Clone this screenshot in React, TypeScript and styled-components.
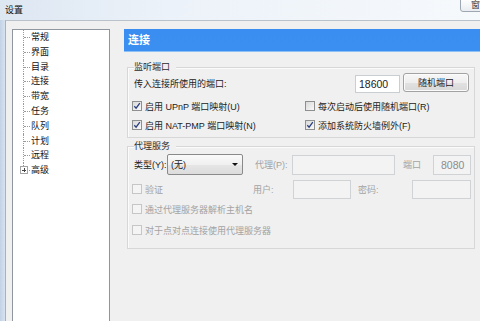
import React from 'react';
import styled, { createGlobalStyle } from 'styled-components';

const Global = createGlobalStyle`
  html, body { margin: 0; padding: 0; width: 480px; height: 321px; overflow: hidden; background: #f0f0f0; }
  body {
    font-family: "Liberation Sans", "Noto Sans CJK SC", sans-serif;
    font-size: 9px;
    color: #222;
  }
  * { box-sizing: border-box; }
`;

const Window = styled.div`
  width: 480px;
  height: 321px;
  display: flex;
  flex-direction: column;
  overflow: hidden;
  background: #f0f0f0;
`;

const TitleBar = styled.div`
  height: 20px;
  flex: none;
  display: flex;
  justify-content: space-between;
  align-items: flex-start;
  padding-left: 5px;
  background: linear-gradient(to right, #dde7f2 0%, #ecf2f9 35%, #f6f9fc 100%);
`;

const TitleText = styled.span`
  align-self: center;
  font-size: 9px;
  color: #111;
  margin-top: -2px;
`;

const CaptionButton = styled.div`
  width: 30px;
  height: 13px;
  margin-top: -1px;
  margin-right: -10px;
  border: 1px solid #9ea7b1;
  border-radius: 0 0 3px 3px;
  background: linear-gradient(#fdfdfd, #e9edf1);
  font-size: 9px;
  color: #333;
  padding-left: 10px;
  line-height: 11px;
  overflow: hidden;
`;

const Frame = styled.div`
  flex: 1;
  display: flex;
  min-height: 0;
`;

const FrameEdge = styled.div`
  width: 5px;
  flex: none;
  background: linear-gradient(to right, #c3d3e6, #d6e2ef);
`;

const Client = styled.div`
  flex: 1;
  display: flex;
  align-items: stretch;
  border-left: 1px solid #a9b2bc;
  border-top: 1px solid #b9c1ca;
  padding: 8px 0 0 6px;
  min-height: 0;
`;

const Tree = styled.div`
  width: 98px;
  flex: none;
  background: #fff;
  border: 1px solid #8f969e;
  margin-bottom: -4px;
`;

const TreeItem = styled.div<{ $last?: boolean }>`
  position: relative;
  height: 14.8px;
  line-height: 14.8px;
  padding-left: 18px;
  font-size: 9px;
  color: #111;
  &::before {
    content: '';
    position: absolute;
    left: 10px;
    top: 0;
    height: ${p => (p.$last ? '7px' : '14.8px')};
    border-left: 1px dotted #9a9a9a;
  }
  &::after {
    content: '';
    position: absolute;
    left: 11px;
    top: 7px;
    width: 6px;
    border-top: 1px dotted #9a9a9a;
  }
`;

const Expander = styled.span`
  position: absolute;
  left: 7px;
  top: 3px;
  width: 8px;
  height: 8px;
  border: 1px solid #a4a4a4;
  background: #fff;
  z-index: 1;
  display: flex;
  align-items: center;
  justify-content: center;
  &::before {
    content: '';
    width: 4px;
    height: 1px;
    background: #444;
    position: absolute;
  }
  &::after {
    content: '';
    width: 1px;
    height: 4px;
    background: #444;
    position: absolute;
  }
`;

const Panel = styled.div`
  flex: 1;
  margin-left: 14px;
  display: flex;
  flex-direction: column;
  min-width: 0;
`;

const Header = styled.div`
  height: 23px;
  flex: none;
  background: linear-gradient(#3a8ef1, #3b8ff0);
  border-bottom: 1px solid #8ebff5;
  color: #fff;
  font-weight: bold;
  font-size: 11px;
  display: flex;
  align-items: center;
  padding-left: 4px;
  padding-bottom: 3px;
`;

const Group = styled.section<{ $mt: number; $pb: number }>`
  margin: ${p => p.$mt}px 6px 0 3px;
  padding: 0 3px ${p => p.$pb}px 6px;
  border: 1px solid #d7d7d7;
  box-shadow: inset 1px 1px 0 #fbfbfb;
  display: flex;
  flex-direction: column;
`;

const GroupTitle = styled.div`
  align-self: flex-start;
  height: 12px;
  line-height: 12px;
  margin-top: -7px;
  padding-right: 6px;
  background: #f0f0f0;
  font-size: 9px;
  color: #2c2c2c;
`;

const Row = styled.div<{ $mt: number; $h: number }>`
  display: flex;
  align-items: center;
  height: ${p => p.$h}px;
  margin-top: ${p => p.$mt}px;
`;

const Text = styled.span<{ $w?: number; $disabled?: boolean; $grow?: boolean }>`
  flex: ${p => (p.$grow ? '1' : 'none')};
  width: ${p => (p.$w ? `${p.$w}px` : 'auto')};
  color: ${p => (p.$disabled ? '#a3a3a3' : '#222')};
  white-space: nowrap;
  font-size: 9px;
`;

const Field = styled.div<{ $w: number; $disabled?: boolean; $h?: number; $pl?: number }>`
  width: ${p => p.$w}px;
  height: ${p => p.$h ?? 19}px;
  flex: none;
  border: 1px solid ${p => (p.$disabled ? '#d0d3d6' : '#c9ced3')};
  background: ${p => (p.$disabled ? '#f3f3f3' : '#fff')};
  display: flex;
  align-items: center;
  padding-left: ${p => p.$pl ?? 3}px;
  font-family: "Liberation Sans", sans-serif;
  font-size: 10.5px;
  color: ${p => (p.$disabled ? '#8c8c8c' : '#222')};
`;

const Button = styled.div`
  width: 66px;
  height: 19px;
  flex: none;
  margin-left: 3px;
  margin-right: 2px;
  margin-top: -2px;
  border: 1px solid #a2a2a2;
  border-radius: 3px;
  background: linear-gradient(#f7f7f7 0%, #eeeeee 50%, #e2e2e2 51%, #d8d8d8 100%);
  box-shadow: inset 0 0 0 1px #fbfbfb;
  display: flex;
  align-items: center;
  justify-content: center;
  font-size: 9px;
  color: #222;
`;

const Select = styled.div`
  width: 76px;
  height: 21px;
  flex: none;
  border: 1px solid #8a8a8a;
  border-radius: 2px;
  background: linear-gradient(#fafafa, #f0f0f0 50%, #e6e6e6 51%, #dcdcdc);
  display: flex;
  align-items: center;
  justify-content: space-between;
  padding: 0 4px 0 3px;
  font-size: 9px;
  color: #222;
`;

const Arrow = styled.span`
  width: 0;
  height: 0;
  border-left: 3px solid transparent;
  border-right: 3px solid transparent;
  border-top: 3px solid #111;
`;

const Check = styled.label<{ $w?: number; $disabled?: boolean }>`
  display: flex;
  align-items: center;
  gap: 3px;
  width: ${p => (p.$w ? `${p.$w}px` : 'auto')};
  flex: none;
  margin-left: -2px;
  color: ${p => (p.$disabled ? '#a3a3a3' : '#222')};
  white-space: nowrap;
  font-size: 9px;
`;

const Box = styled.span<{ $disabled?: boolean }>`
  width: 10px;
  height: 10px;
  flex: none;
  border: 1px solid ${p => (p.$disabled ? '#c6c6c6' : '#8e8f8f')};
  background: ${p => (p.$disabled ? '#f4f4f4' : 'linear-gradient(135deg, #d9d9d9, #f9f9f9)')};
  display: flex;
  align-items: center;
  justify-content: center;
`;

const Spacer = styled.span<{ $w: number }>`
  width: ${p => p.$w}px;
  flex: none;
`;

function CheckItem({ label, checked, disabled, w }: { label: string; checked?: boolean; disabled?: boolean; w?: number }) {
  return (
    <Check $w={w} $disabled={disabled}>
      <Box $disabled={disabled}>
        {checked && (
          <svg width="8" height="8" viewBox="0 0 8 8">
            <path d="M1.3 4.3 L3.1 6.2 L6.8 1.2" fill="none" stroke="#2b3f80" strokeWidth="1.3" />
          </svg>
        )}
      </Box>
      {label}
    </Check>
  );
}

const treeItems = ['常规', '界面', '目录', '连接', '带宽', '任务', '队列', '计划', '远程', '高级'];

export default function App() {
  return (
    <Window>
      <Global />
      <TitleBar>
        <TitleText>设置</TitleText>
        <CaptionButton>窗</CaptionButton>
      </TitleBar>
      <Frame>
        <FrameEdge />
        <Client>
          <Tree>
            {treeItems.map((t, i) => (
              <TreeItem key={t} $last={i === treeItems.length - 1}>
                {i === treeItems.length - 1 && <Expander />}
                {t}
              </TreeItem>
            ))}
          </Tree>
          <Panel>
            <Header>连接</Header>
            <Group $mt={15} $pb={5}>
              <GroupTitle>监听端口</GroupTitle>
              <Row $mt={1} $h={19}>
                <Text $grow>传入连接所使用的端口:</Text>
                <Field $w={45} $h={18}>18600</Field>
                <Button>随机端口</Button>
              </Row>
              <Row $mt={6} $h={14}>
                <CheckItem w={175} checked label="启用 UPnP 端口映射(U)" />
                <CheckItem label="每次启动后使用随机端口(R)" />
              </Row>
              <Row $mt={5} $h={14}>
                <CheckItem w={175} checked label="启用 NAT-PMP 端口映射(N)" />
                <CheckItem checked label="添加系统防火墙例外(F)" />
              </Row>
            </Group>
            <Group $mt={8} $pb={11}>
              <GroupTitle>代理服务</GroupTitle>
              <Row $mt={2} $h={21}>
                <Text $w={33}>类型(Y):</Text>
                <Select>
                  (无)
                  <Arrow />
                </Select>
                <Spacer $w={12} />
                <Text $w={37} $disabled>代理(P):</Text>
                <Field $w={103} $h={20} $disabled />
                <Spacer $w={8} />
                <Text $w={30} $disabled>端口</Text>
                <Field $w={38} $h={20} $pl={7} $disabled>8080</Field>
              </Row>
              <Row $mt={4} $h={20}>
                <CheckItem w={121} disabled label="验证" />
                <Text $w={40} $disabled>用户:</Text>
                <Field $w={58} $disabled />
                <Spacer $w={7} />
                <Text $w={54} $disabled>密码:</Text>
                <Field $w={59} $disabled />
              </Row>
              <Row $mt={3} $h={14}>
                <CheckItem disabled label="通过代理服务器解析主机名" />
              </Row>
              <Row $mt={7} $h={14}>
                <CheckItem disabled label="对于点对点连接使用代理服务器" />
              </Row>
            </Group>
          </Panel>
        </Client>
      </Frame>
    </Window>
  );
}
